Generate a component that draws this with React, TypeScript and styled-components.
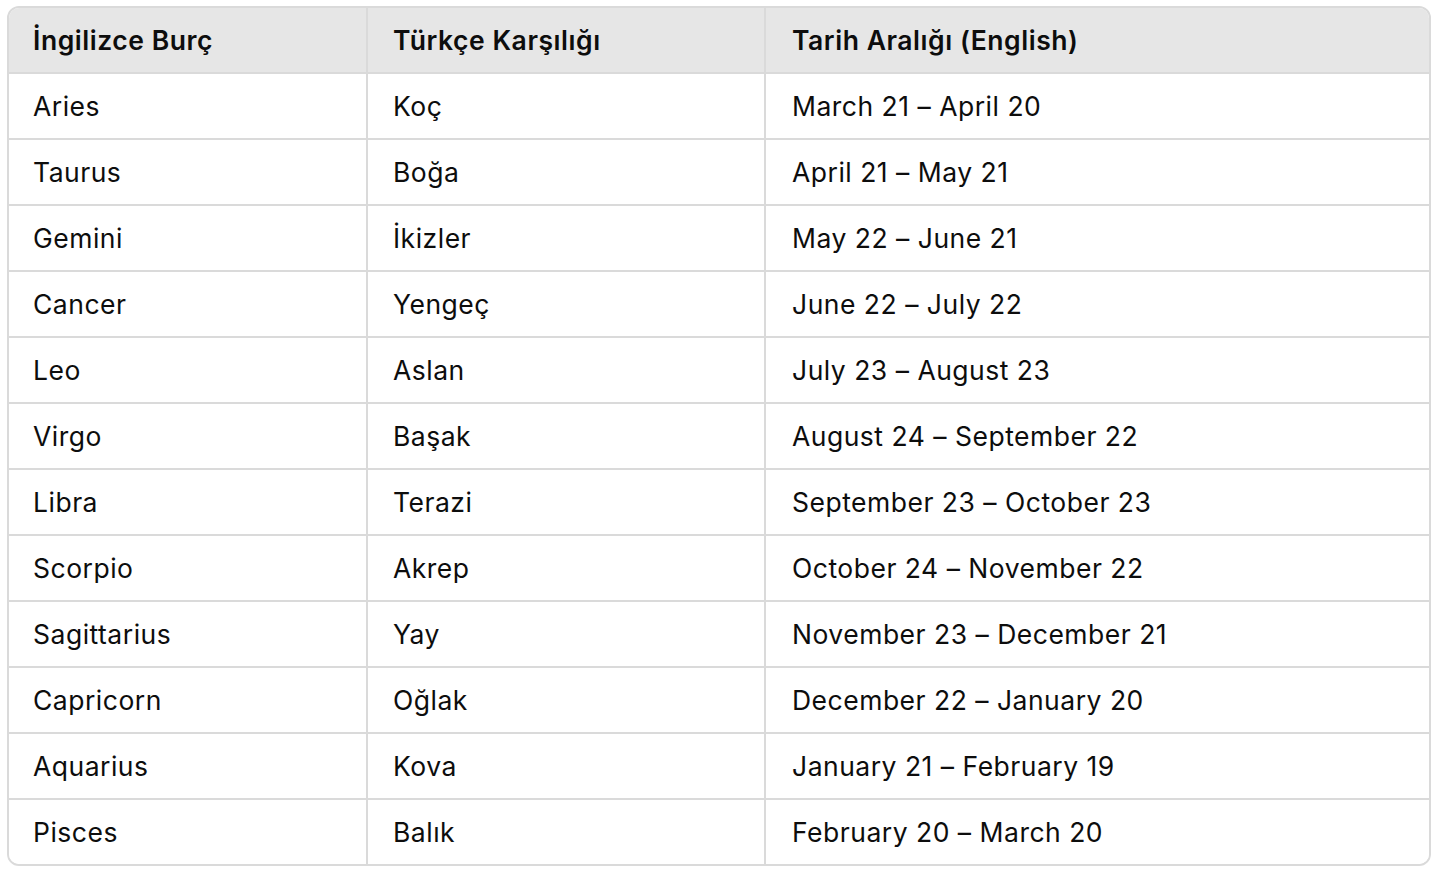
import styled, { createGlobalStyle } from "styled-components";

const rows = [
  ["Aries", "Koç", "March 21 – April 20"],
  ["Taurus", "Boğa", "April 21 – May 21"],
  ["Gemini", "İkizler", "May 22 – June 21"],
  ["Cancer", "Yengeç", "June 22 – July 22"],
  ["Leo", "Aslan", "July 23 – August 23"],
  ["Virgo", "Başak", "August 24 – September 22"],
  ["Libra", "Terazi", "September 23 – October 23"],
  ["Scorpio", "Akrep", "October 24 – November 22"],
  ["Sagittarius", "Yay", "November 23 – December 21"],
  ["Capricorn", "Oğlak", "December 22 – January 20"],
  ["Aquarius", "Kova", "January 21 – February 19"],
  ["Pisces", "Balık", "February 20 – March 20"],
];

const GlobalStyle = createGlobalStyle`
  body {
    margin: 0;
    background: #ffffff;
    font-family: Inter, "Noto Sans", sans-serif;
    color: #0d0d0d;
  }
`;

const Page = styled.div`
  padding: 6px 8px 0 7px;
`;

const Table = styled.div`
  width: 1424px;
  box-sizing: border-box;
  border: 2px solid #dadada;
  border-radius: 12px;
  overflow: hidden;
`;

const Row = styled.div<{ $head?: boolean }>`
  display: grid;
  grid-template-columns: 359px 398px 1fr;
  height: 66px;
  box-sizing: border-box;
  background: ${(p) => (p.$head ? "#e6e6e6" : "#ffffff")};
  border-bottom: 2px solid #dadada;
  &:last-child {
    border-bottom: none;
    height: 64px;
  }
`;

const Cell = styled.div<{ $head?: boolean }>`
  display: flex;
  align-items: center;
  padding: 0 24px 0 25px;
  box-sizing: border-box;
  border-right: 2px solid #dadada;
  font-size: 26.5px;
  font-weight: ${(p) => (p.$head ? 600 : 400)};
  letter-spacing: ${(p) => (p.$head ? "0.55px" : "0.5px")};
  white-space: nowrap;
  &:first-child {
    padding-left: 24px;
  }
  &:last-child {
    border-right: none;
    padding-left: 26px;
  }
`;

export default function App() {
  return (
    <Page>
      <GlobalStyle />
      <Table>
        <Row $head>
          <Cell $head>İngilizce Burç</Cell>
          <Cell $head>Türkçe Karşılığı</Cell>
          <Cell $head>Tarih Aralığı (English)</Cell>
        </Row>
        {rows.map((r) => (
          <Row key={r[0]}>
            {r.map((c) => (
              <Cell key={c}>{c}</Cell>
            ))}
          </Row>
        ))}
      </Table>
    </Page>
  );
}
